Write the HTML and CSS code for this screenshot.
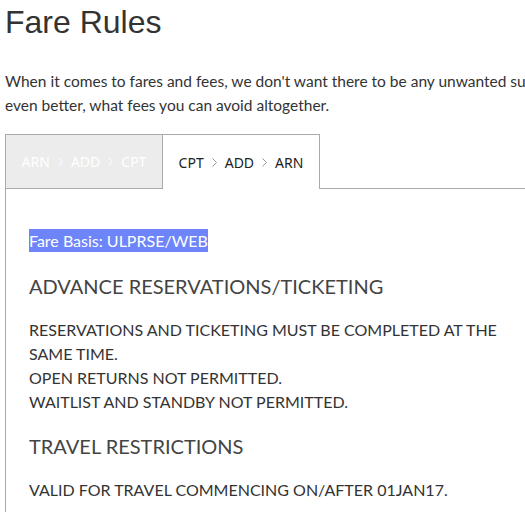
FILE: index.html
```html
<!DOCTYPE html>
<html lang="en">
<head>
  <meta charset="UTF-8">
  <meta name="viewport" content="width=device-width, initial-scale=1.0">
  <title>Fare Rules</title>
  <link rel="stylesheet" href="styles.css">
</head>
<body>
  <div class="page">
    <h1>Fare Rules</h1>
    <p class="intro">When it comes to fares and fees, we don't want there to be any unwanted surprises. Here you can see what you pay for and,<br>
      even better, what fees you can avoid altogether.</p>

    <div class="tabs">
      <div class="tab">
        ARN
        <svg class="sep" width="5" height="9" viewBox="0 0 5 9"><polyline points="0.5,0.5 4.5,4.5 0.5,8.5"/></svg>
        ADD
        <svg class="sep" width="5" height="9" viewBox="0 0 5 9"><polyline points="0.5,0.5 4.5,4.5 0.5,8.5"/></svg>
        CPT
      </div>
      <div class="tab active">
        CPT
        <svg class="sep" width="5" height="9" viewBox="0 0 5 9"><polyline points="0.5,0.5 4.5,4.5 0.5,8.5"/></svg>
        ADD
        <svg class="sep" width="5" height="9" viewBox="0 0 5 9"><polyline points="0.5,0.5 4.5,4.5 0.5,8.5"/></svg>
        ARN
      </div>
      <div class="tab-rest"></div>
    </div>
    <div class="panel">
      <p class="basis"><span class="hl">Fare Basis: ULPRSE/WEB</span></p>

      <h2>ADVANCE RESERVATIONS/TICKETING</h2>
      <p>RESERVATIONS AND TICKETING MUST BE COMPLETED AT THE<br>
        SAME TIME.<br>
        OPEN RETURNS NOT PERMITTED.<br>
        WAITLIST AND STANDBY NOT PERMITTED.</p>

      <h2>TRAVEL RESTRICTIONS</h2>
      <p>VALID FOR TRAVEL COMMENCING ON/AFTER 01JAN17.</p>
    </div>
  </div>
</body>
</html>
```

FILE: styles.css
```css
html, body {
  overflow: hidden;
}
body {
  margin: 0;
  padding: 0;
  font-family: Lato, "Open Sans", sans-serif;
  color: #333;
  background: #fff;
}
.page {
  width: 1100px;
  padding: 0 5px;
}
h1 {
  font-family: "Liberation Sans", Arial, sans-serif;
  font-weight: normal;
  font-size: 32px;
  line-height: 40px;
  color: #333;
  margin: 2px 0 0;
}
.intro {
  font-size: 15.5px;
  line-height: 24px;
  margin: 27px 0 17px;
}
.tabs {
  display: flex;
  height: 55px;
}
.tab {
  width: 156px;
  display: flex;
  align-items: center;
  justify-content: center;
  gap: 8px;
  font-family: "Noto Sans", sans-serif;
  font-size: 14px;
  color: #fff;
  background: #ececec;
  border: 1px solid #aaa;
}
.tab .sep {
  fill: none;
  stroke: #fff;
  stroke-width: 1;
}
.tab.active {
  background: #fff;
  color: #222;
  border-left: none;
  border-bottom: none;
}
.tab.active .sep {
  stroke: #999;
}
.tab-rest {
  flex: 1;
  border-bottom: 1px solid #aaa;
}
.panel {
  border-left: 1px solid #aaa;
  padding: 40px 24px 20px 23px;
}
.panel p {
  font-size: 16px;
  line-height: 24px;
  margin: 0 0 18px;
}
.hl {
  background: #6d85f8;
  color: #fff;
  padding: 2px 0;
}
.panel .basis {
  margin-bottom: 19px;
}
h2 {
  font-weight: normal;
  font-size: 20px;
  line-height: 28px;
  color: #444;
  margin: 0 0 18px;
}
```
